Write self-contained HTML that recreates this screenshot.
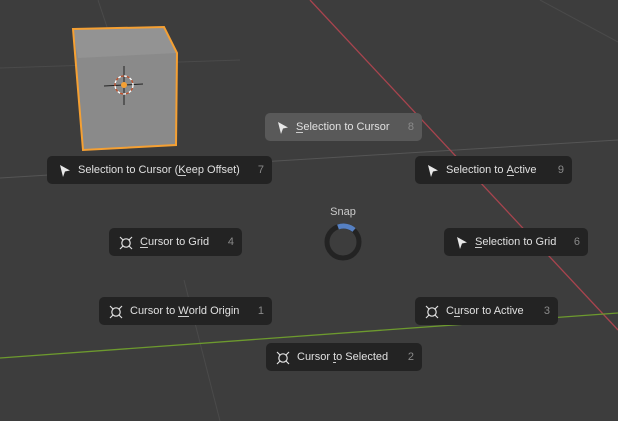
<!DOCTYPE html>
<html><head><style>
body{margin:0;width:618px;height:421px;background:#3d3d3d;overflow:hidden;position:relative;font-family:"Liberation Sans","DejaVu Sans",sans-serif}
.b{position:absolute;height:28px;background:#232323;border-radius:5px;color:#e0e0e0;font-size:11px;line-height:29px;box-sizing:border-box}
.b .t{position:absolute;left:31px;top:0}
.b .n{position:absolute;right:8px;top:0;color:#8a8a8a}
.b svg{position:absolute;left:10px;top:8px}
.a{background:#595959}
u{text-decoration:none;border-bottom:1px solid #ccc;line-height:10px;display:inline-block}
</style></head><body>
<svg width="618" height="421" style="position:absolute;left:0;top:0">
<line x1="0" y1="178" x2="618" y2="140" stroke="#555" stroke-width="1"/>
<line x1="0" y1="68" x2="240" y2="60" stroke="#4a4a4a" stroke-width="1"/>
<line x1="540" y1="0" x2="618" y2="42" stroke="#4a4a4a"/>
<line x1="98" y1="0" x2="108" y2="30" stroke="#4a4a4a"/>
<line x1="184" y1="280" x2="220" y2="421" stroke="#4a4a4a"/>
<line x1="310" y1="0" x2="618" y2="330" stroke="#a8444e" stroke-width="1.3"/>
<line x1="0" y1="358" x2="618" y2="313" stroke="#6d9a2e" stroke-width="1.3"/>
<polygon points="73,29 164,27 177,53 176,145 83,150" fill="#8a8a8a"/>
<polygon points="73,29 164,27 177,53 78,58" fill="#939393"/>
<polygon points="73,29 164,27 177,53 176,145 83,150" fill="none" stroke="#f5a033" stroke-width="2"/>
<line x1="124" y1="66" x2="124" y2="105" stroke="#222"/>
<line x1="104" y1="86" x2="143" y2="84" stroke="#222"/>
<circle cx="124" cy="85" r="9" fill="none" stroke="#fff" stroke-width="1.3" stroke-dasharray="3 3"/>
<circle cx="124" cy="85" r="9" fill="none" stroke="#c0502a" stroke-width="1.3" stroke-dasharray="3 3" stroke-dashoffset="3"/>
<circle cx="124" cy="85" r="3" fill="#f5a033"/>
<circle cx="343" cy="242" r="16" fill="none" stroke="#232323" stroke-width="5"/>
<path d="M338 227 A16 16 0 0 1 354 230" fill="none" stroke="#5680c2" stroke-width="5"/>
<text x="343" y="215" fill="#ccc" font-size="11" text-anchor="middle" font-family="Liberation Sans,sans-serif">Snap</text>
</svg>
<svg width="0" height="0" style="position:absolute"><defs>
<g id="ar"><path d="M3 1 L13 6.5 L8 7.5 L6 13 Z" fill="#e8e8e8"/></g>
<g id="cu"><circle cx="7" cy="7" r="4.2" fill="none" stroke="#e0e0e0" stroke-width="1.2"/><path d="M1 1 L4 4 M13 1 L10 4 M1 13 L4 10 M13 13 L10 10" stroke="#e0e0e0" stroke-width="1.2"/></g>
</defs></svg>
<div class="b a" style="left:265px;top:113px;width:157px"><svg width="14" height="14"><use href="#ar"/></svg><span class="t"><u>S</u>election to Cursor</span><span class="n">8</span></div>
<div class="b" style="left:47px;top:156px;width:225px"><svg width="14" height="14"><use href="#ar"/></svg><span class="t">Selection to Cursor (<u>K</u>eep Offset)</span><span class="n">7</span></div>
<div class="b" style="left:415px;top:156px;width:157px"><svg width="14" height="14"><use href="#ar"/></svg><span class="t">Selection to <u>A</u>ctive</span><span class="n">9</span></div>
<div class="b" style="left:109px;top:228px;width:133px"><svg width="14" height="14"><use href="#cu"/></svg><span class="t"><u>C</u>ursor to Grid</span><span class="n">4</span></div>
<div class="b" style="left:444px;top:228px;width:144px"><svg width="14" height="14"><use href="#ar"/></svg><span class="t"><u>S</u>election to Grid</span><span class="n">6</span></div>
<div class="b" style="left:99px;top:297px;width:173px"><svg width="14" height="14"><use href="#cu"/></svg><span class="t">Cursor to <u>W</u>orld Origin</span><span class="n">1</span></div>
<div class="b" style="left:415px;top:297px;width:143px"><svg width="14" height="14"><use href="#cu"/></svg><span class="t">C<u>u</u>rsor to Active</span><span class="n">3</span></div>
<div class="b" style="left:266px;top:343px;width:156px"><svg width="14" height="14"><use href="#cu"/></svg><span class="t">Cursor <u>t</u>o Selected</span><span class="n">2</span></div>
</body></html>
